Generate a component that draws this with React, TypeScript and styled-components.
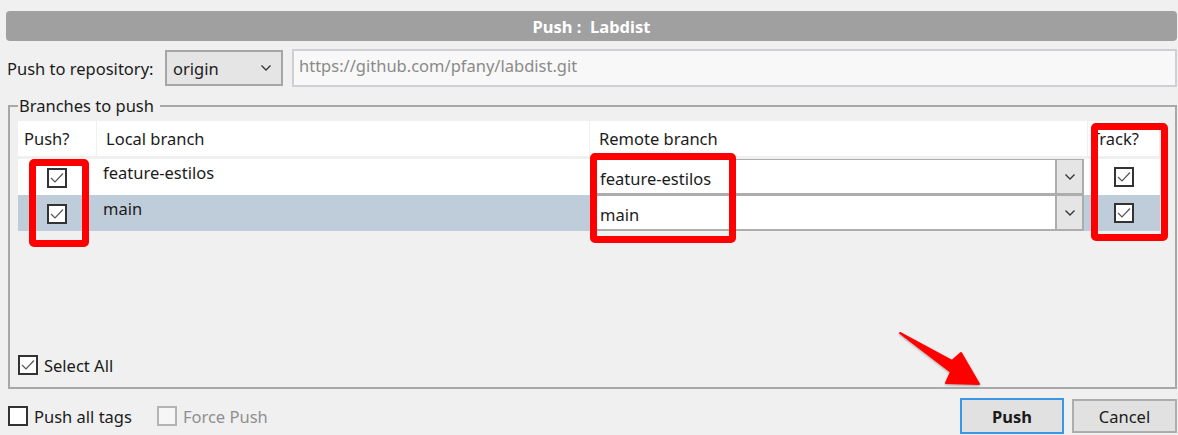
import React from "react";
import styled, { createGlobalStyle } from "styled-components";

const GlobalStyle = createGlobalStyle`
  html, body { margin: 0; padding: 0; background: #f0f0f0; }
  body { font-family: "Noto Sans", "Open Sans", sans-serif; color: #1b1b1b; }
  * { box-sizing: border-box; }
`;

const Page = styled.div`
  position: relative;
  width: 1178px;
  height: 435px;
  overflow: hidden;
  padding: 11px 1px 0 6px;
  font-size: 16.5px;
`;

const TitleBar = styled.div`
  height: 30px;
  background: #a0a0a0;
  border-radius: 4px;
  display: flex;
  align-items: center;
  justify-content: center;
  color: #fff;
  font-weight: 700;
  font-size: 16.5px;
  white-space: pre;
`;

const RepoRow = styled.div`
  display: flex;
  align-items: center;
  height: 38px;
  margin-top: 8px;
  padding-left: 1px;
`;

const Label = styled.span`
  width: 158px;
  flex: none;
`;

const Select = styled.div`
  width: 118px;
  height: 36px;
  border: 2px solid #a6a6a6;
  background: #e5e5e5;
  display: flex;
  align-items: center;
  justify-content: space-between;
  padding: 0 10px 0 6px;
  flex: none;
`;

const UrlInput = styled.div`
  flex: 1;
  height: 38px;
  margin-left: 9px;
  border: 2px solid #cfcfd4;
  background: #f8f8f8;
  color: #8a8a8a;
  padding: 3px 5px;
  line-height: 24px;
`;

const Group = styled.fieldset`
  margin: 8px 0 0 2px;
  padding: 0 8px 11px 8px;
  border: 2px solid #a8a8a8;
  border-radius: 0;
  height: 294px;
  display: flex;
  flex-direction: column;
`;

const Legend = styled.legend`
  padding: 0 6px 0 1px;
  margin-left: 0;
  line-height: 22px;
`;

const TableArea = styled.div`
  margin-top: 4px;
  flex: 1;
  margin-right: 7px;
`;

const Grid = styled.div`
  display: grid;
  grid-template-columns: 79px 493px 498px 72px;
`;

const HeadCell = styled.div<{ $pad?: number }>`
  background: #fff;
  height: 35px;
  display: flex;
  align-items: center;
  padding-left: ${(p) => p.$pad ?? 0}px;
  border-right: 1px solid #f0f0f0;
  margin-bottom: 3px;
  white-space: nowrap;
  overflow: hidden;
`;

const Cell = styled.div<{ $sel?: boolean }>`
  height: 36px;
  background: ${(p) => (p.$sel ? "#bfcddb" : "#fff")};
  display: flex;
  align-items: center;
`;

const CheckCell = styled(Cell)`
  justify-content: center;
  padding-right: 2px;
  padding-top: 2px;
`;

const TrackCell = styled(Cell)`
  justify-content: center;
`;

const NameCell = styled(Cell)`
  align-items: flex-start;
  padding: 2px 0 0 6px;
`;

const Combo = styled.div`
  flex: 1;
  height: 36px;
  display: flex;
  border: 2px solid #adadad;
  border-top-width: 1px;
  background: #fff;
  margin-left: 2px;
  margin-right: 4px;
`;

const ComboText = styled.div`
  flex: 1;
  display: flex;
  align-items: center;
  padding: 3px 0 0 6px;
`;

const ComboButton = styled.div`
  width: 27px;
  border-left: 2px solid #adadad;
  background: #e5e5e5;
  display: flex;
  align-items: center;
  justify-content: center;
`;

const Box = styled.span<{ $disabled?: boolean }>`
  width: 20px;
  height: 20px;
  border: 2px solid ${(p) => (p.$disabled ? "#b4b4b4" : "#333")};
  background: ${(p) => (p.$disabled ? "#f6f6f6" : "#fff")};
  display: inline-flex;
  align-items: center;
  justify-content: center;
  flex: none;
`;

const CheckLabel = styled.label<{ $disabled?: boolean }>`
  display: inline-flex;
  align-items: center;
  gap: 6px;
  color: ${(p) => (p.$disabled ? "#8f8f8f" : "#1b1b1b")};
`;

const SelectAllRow = styled.div`
  padding-left: 0;
  height: 22px;
  display: flex;
  align-items: center;
`;

const BottomRow = styled.div`
  display: flex;
  align-items: center;
  height: 36px;
  margin-top: 9px;
  padding-left: 2px;
  gap: 25px;
`;

const Spacer = styled.div`
  flex: 1;
`;

const Buttons = styled.div`
  display: flex;
  gap: 8px;
  align-items: flex-end;
  align-self: stretch;
`;

const Button = styled.button<{ $primary?: boolean }>`
  width: ${(p) => (p.$primary ? 104 : 105)}px;
  height: ${(p) => (p.$primary ? 36 : 34)}px;
  background: #e1e1e1;
  border: 2px solid ${(p) => (p.$primary ? "#3c96e6" : "#adadad")};
  font-family: inherit;
  font-size: 16.5px;
  font-weight: ${(p) => (p.$primary ? 700 : 400)};
  color: #1b1b1b;
  padding: 0;
  margin-bottom: ${(p) => (p.$primary ? 0 : 1)}px;
`;

const Highlight = styled.div<{ $x: number; $y: number; $w: number; $h: number }>`
  position: absolute;
  left: ${(p) => p.$x}px;
  top: ${(p) => p.$y}px;
  width: ${(p) => p.$w}px;
  height: ${(p) => p.$h}px;
  border: 7px solid #ff0000;
  border-radius: 5px;
  pointer-events: none;
`;

const Arrow = styled.svg`
  position: absolute;
  left: 895px;
  top: 325px;
  width: 95px;
  height: 65px;
  overflow: visible;
`;

const Check = ({ disabled, checked = true }: { disabled?: boolean; checked?: boolean }) => (
  <Box $disabled={disabled}>
    {checked && (
      <svg width="16" height="16" viewBox="0 0 16 16">
        <polyline points="2,8 6,12 14,3.5" fill="none" stroke="#555" strokeWidth="1.2" />
      </svg>
    )}
  </Box>
);

const Chevron = () => (
  <svg width="10" height="6" viewBox="0 0 10 6">
    <polyline points="0.5,0.5 5,5 9.5,0.5" fill="none" stroke="#333" strokeWidth="1.3" />
  </svg>
);

const rows = [
  { name: "feature-estilos", remote: "feature-estilos", sel: false },
  { name: "main", remote: "main", sel: true },
];

export default function App() {
  return (
    <>
      <GlobalStyle />
      <Page>
        <TitleBar>{"Push :  Labdist"}</TitleBar>
        <RepoRow>
          <Label>Push to repository:</Label>
          <Select>
            <span>origin</span>
            <Chevron />
          </Select>
          <UrlInput>https://github.com/pfany/labdist.git</UrlInput>
        </RepoRow>
        <Group>
          <Legend>Branches to push</Legend>
          <TableArea>
            <Grid>
              <HeadCell $pad={6}>Push?</HeadCell>
              <HeadCell $pad={9}>Local branch</HeadCell>
              <HeadCell $pad={9}>Remote branch</HeadCell>
              <HeadCell $pad={3}>Track?</HeadCell>
              {rows.map((r) => (
                <React.Fragment key={r.name}>
                  <CheckCell $sel={r.sel}>
                    <Check />
                  </CheckCell>
                  <NameCell $sel={r.sel}>{r.name}</NameCell>
                  <Cell $sel={r.sel}>
                    <Combo>
                      <ComboText>{r.remote}</ComboText>
                      <ComboButton>
                        <Chevron />
                      </ComboButton>
                    </Combo>
                  </Cell>
                  <TrackCell $sel={r.sel}>
                    <Check />
                  </TrackCell>
                </React.Fragment>
              ))}
            </Grid>
          </TableArea>
          <SelectAllRow>
            <CheckLabel>
              <Check />
              Select All
            </CheckLabel>
          </SelectAllRow>
        </Group>
        <BottomRow>
          <CheckLabel>
            <Check checked={false} />
            Push all tags
          </CheckLabel>
          <CheckLabel $disabled>
            <Check checked={false} disabled />
            Force Push
          </CheckLabel>
          <Spacer />
          <Buttons>
            <Button $primary>Push</Button>
            <Button>Cancel</Button>
          </Buttons>
        </BottomRow>
        <Highlight $x={29} $y={159} $w={60} $h={88} />
        <Highlight $x={590} $y={153} $w={146} $h={90} />
        <Highlight $x={1091} $y={123} $w={77} $h={118} />
        <Arrow viewBox="0 0 95 65">
          <defs>
            <filter id="sh" x="-20%" y="-20%" width="140%" height="140%">
              <feDropShadow dx="0" dy="1" stdDeviation="0.8" floodColor="#000" floodOpacity="0.35" />
            </filter>
          </defs>
          <polygon
            points="5,8 57,36 66,28 84,59 51,58 56,47"
            fill="#ff0000"
            stroke="#ff0000"
            strokeWidth="2"
            strokeLinejoin="round"
            filter="url(#sh)"
          />
        </Arrow>
      </Page>
    </>
  );
}
